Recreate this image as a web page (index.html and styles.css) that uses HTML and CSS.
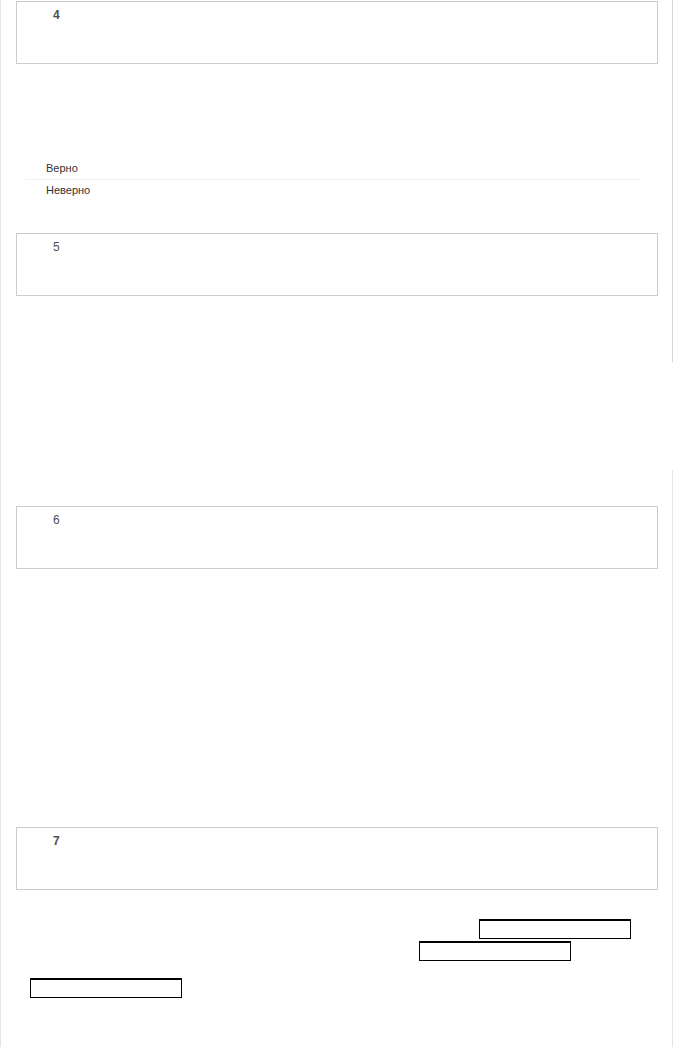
FILE: index.html
```html
<!DOCTYPE html>
<html lang="ru">
<head>
    <meta charset="UTF-8">
    <meta name="viewport" content="width=device-width, initial-scale=1.0">
    <title>Тест</title>
    <link rel="stylesheet" href="styles.css">
</head>
<body>

<div class="page">
    <div class="main">
        <div class="question q4">
            <div class="num">4</div>
        </div>

        <ul class="answers">
            <li>Верно</li>
            <li>Неверно</li>
        </ul>

        <div class="question q5">
            <div class="num">5</div>
        </div>

        <div class="question q6">
            <div class="num">6</div>
        </div>

        <div class="question q7">
            <div class="num">7</div>
        </div>

        <div class="blanks">
            <div class="blank-row row1"><span class="blank"></span></div>
            <div class="blank-row row2"><span class="blank"></span></div>
            <div class="blank-row row3"><span class="blank"></span></div>
        </div>
    </div>

    <div class="rail">
        <div class="rail-top"></div>
        <div class="rail-gap"></div>
        <div class="rail-bottom"></div>
    </div>
</div>

</body>
</html>
```

FILE: styles.css
```css
body {
    margin: 0;
    background-color: #ffffff;
    font-family: 'Liberation Sans', Arial, sans-serif;
    color: #333333;
}

.page {
    display: flex;
    min-height: 1047px;
}

.main {
    width: 671px;
    border-left: 1px solid #e4e4e4;
    padding-top: 1px;
}

.rail {
    width: 1px;
    display: flex;
    flex-direction: column;
}

.rail-top {
    height: 362px;
    background-color: #d8d8d8;
}

.rail-gap {
    height: 108px;
}

.rail-bottom {
    flex: 1;
    background-color: #e4e4e4;
}

.question {
    margin-left: 15px;
    width: 640px;
    height: 61px;
    border: 1px solid #cccccc;
}

.num {
    padding: 6px 0 0 36px;
    font-size: 12px;
    line-height: 14px;
    color: #4a4f55;
}

.q4 .num,
.q7 .num {
    font-weight: bold;
}

.answers {
    list-style: none;
    margin: 94px 0 0 24px;
    padding: 0;
    width: 616px;
}

.answers li {
    height: 21px;
    line-height: 20px;
    padding-left: 21px;
    font-size: 11px;
    color: #333333;
}

.answers li:first-child {
    border-bottom: 1px solid #f2f2f2;
}

.q5 {
    margin-top: 32px;
}

.q6 {
    margin-top: 210px;
}

.q7 {
    margin-top: 258px;
}

.blanks {
    margin-top: 29px;
}

.blank-row {
    display: flex;
}

.blank {
    display: block;
    width: 150px;
    height: 17px;
    border: 1px solid #000000;
    border-top-width: 2px;
}

.row1 {
    padding-left: 478px;
}

.row2 {
    margin-top: 2px;
    padding-left: 418px;
}

.row3 {
    margin-top: 17px;
    padding-left: 29px;
}
```
